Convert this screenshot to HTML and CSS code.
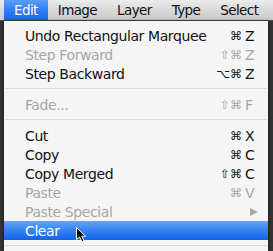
FILE: index.html
```html
<!DOCTYPE html>
<html lang="en">
<head>
    <meta charset="UTF-8">
    <title>Edit Menu</title>
    <link rel="stylesheet" href="styles.css">
</head>
<body>
    <div class="menubar">
        <span class="bar-item active">Edit</span>
        <span class="bar-item">Image</span>
        <span class="bar-item">Layer</span>
        <span class="bar-item">Type</span>
        <span class="bar-item">Select</span>
    </div>

    <div class="menu">
        <div class="row">
            <span>Undo Rectangular Marquee</span>
            <span class="keys"><span class="mod">⌘</span><span class="key">Z</span></span>
        </div>
        <div class="row disabled">
            <span>Step Forward</span>
            <span class="keys"><span class="mod">⇧⌘</span><span class="key">Z</span></span>
        </div>
        <div class="row">
            <span>Step Backward</span>
            <span class="keys"><span class="mod">⌥⌘</span><span class="key">Z</span></span>
        </div>
        <div class="separator"></div>
        <div class="row disabled">
            <span>Fade...</span>
            <span class="keys"><span class="mod">⇧⌘</span><span class="key">F</span></span>
        </div>
        <div class="separator"></div>
        <div class="row">
            <span>Cut</span>
            <span class="keys"><span class="mod">⌘</span><span class="key">X</span></span>
        </div>
        <div class="row">
            <span>Copy</span>
            <span class="keys"><span class="mod">⌘</span><span class="key">C</span></span>
        </div>
        <div class="row">
            <span>Copy Merged</span>
            <span class="keys"><span class="mod">⇧⌘</span><span class="key">C</span></span>
        </div>
        <div class="row disabled">
            <span>Paste</span>
            <span class="keys"><span class="mod">⌘</span><span class="key">V</span></span>
        </div>
        <div class="row disabled">
            <span>Paste Special</span>
            <span class="submenu"></span>
        </div>
        <div class="row selected">
            <span>Clear</span>
        </div>
        <div class="separator"></div>

        <svg class="cursor" width="12" height="16" viewBox="0 0 12 16">
            <path d="M0.5 0.5 L0.5 12.5 L3.5 10 L6 14.8 L8 13.9 L5.6 9.2 L9.6 9.2 Z" fill="#000" stroke="#fff" stroke-width="1" stroke-linejoin="round"/>
        </svg>
    </div>
</body>
</html>
```

FILE: styles.css
```css
* {
    margin: 0;
    padding: 0;
    box-sizing: border-box;
}

body {
    width: 273px;
    height: 251px;
    overflow: hidden;
    background: #333;
    font-family: 'DejaVu Sans', Verdana, sans-serif;
    color: #111;
}

.menubar {
    height: 21px;
    padding-left: 4px;
    display: flex;
    background: linear-gradient(#ececec, #d9d9d9 50%, #cbcbcb);
    border-bottom: 1px solid #4a4a4a;
}

.bar-item {
    padding: 0 10px;
    line-height: 20px;
    font-size: 13.5px;
    letter-spacing: -0.6px;
    color: #111;
}

.bar-item.active {
    color: #fff;
    background: linear-gradient(#5a9ef6, #2f7ef1 50%, #1a68ea);
}

.menu {
    position: relative;
    margin-left: 4px;
    width: 264px;
    height: 230px;
    padding-top: 5px;
    background: #f5f5f5;
    box-shadow: 0 0 3px rgba(0, 0, 0, 0.6);
}

.row {
    height: 19px;
    padding: 0 14px 0 21px;
    display: flex;
    justify-content: space-between;
    align-items: center;
    font-size: 14px;
    letter-spacing: -0.4px;
    white-space: nowrap;
}

.row.disabled {
    color: #a6a6a6;
}

.row.selected {
    color: #fff;
    background: linear-gradient(#66a4f7, #3482f2 50%, #1363e9);
}

.keys {
    display: flex;
    align-items: center;
    letter-spacing: 0;
}

.mod {
    font-size: 12px;
    margin-right: 3px;
}

.key {
    width: 9px;
    font-size: 14px;
}

.submenu {
    width: 0;
    height: 0;
    margin-right: -4px;
    border-top: 4.5px solid transparent;
    border-bottom: 4.5px solid transparent;
    border-left: 8px solid #a8a8a8;
}

.separator {
    height: 12px;
    margin: 0 1px;
    background: linear-gradient(transparent 5px, #dadada 5px, #dadada 6px, transparent 6px);
}

.cursor {
    position: absolute;
    left: 72px;
    top: 206px;
}
```
